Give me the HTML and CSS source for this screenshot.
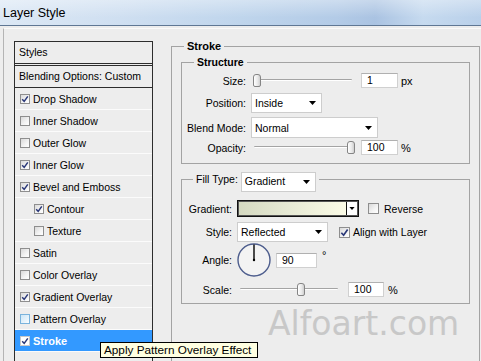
FILE: index.html
```html
<!DOCTYPE html>
<html>
<head>
<meta charset="utf-8">
<link rel="stylesheet" href="styles.css">
</head>
<body>
<div class="window">
  <header class="titlebar"><span class="title">Layer Style</span></header>
  <div class="panel">
    <div class="styles-list">
      <div class="list-head">Styles</div>
      <div class="list-blend">Blending Options: Custom</div>
      <ul class="effects">
        <li class="effect"><span class="cb checked"><svg viewBox="0 0 8 8"><path d="M1.2 4.2 L3.2 6.4 L6.8 1.4"/></svg></span>Drop Shadow</li>
        <li class="effect"><span class="cb"></span>Inner Shadow</li>
        <li class="effect"><span class="cb"></span>Outer Glow</li>
        <li class="effect"><span class="cb checked"><svg viewBox="0 0 8 8"><path d="M1.2 4.2 L3.2 6.4 L6.8 1.4"/></svg></span>Inner Glow</li>
        <li class="effect"><span class="cb checked"><svg viewBox="0 0 8 8"><path d="M1.2 4.2 L3.2 6.4 L6.8 1.4"/></svg></span>Bevel and Emboss</li>
        <li class="effect sub"><span class="cb checked"><svg viewBox="0 0 8 8"><path d="M1.2 4.2 L3.2 6.4 L6.8 1.4"/></svg></span>Contour</li>
        <li class="effect sub"><span class="cb"></span>Texture</li>
        <li class="effect"><span class="cb"></span>Satin</li>
        <li class="effect"><span class="cb"></span>Color Overlay</li>
        <li class="effect"><span class="cb checked"><svg viewBox="0 0 8 8"><path d="M1.2 4.2 L3.2 6.4 L6.8 1.4"/></svg></span>Gradient Overlay</li>
        <li class="effect"><span class="cb hover"></span>Pattern Overlay</li>
        <li class="effect selected"><span class="cb checked"><svg viewBox="0 0 8 8"><path d="M1.2 4.2 L3.2 6.4 L6.8 1.4"/></svg></span>Stroke</li>
        <li class="effect filler"></li>
      </ul>
    </div>

    <fieldset class="group stroke">
      <legend class="legend">Stroke</legend>
      <fieldset class="group inner structure">
        <legend class="legend">Structure</legend>
        <div class="rows">
          <div class="row s-row r-size">
            <span class="lbl">Size:</span>
            <div class="ctrl">
              <div class="slider"><span class="track"></span><span class="thumb" style="left:2px"></span></div>
              <span class="input w37">1</span>
              <span class="unit">px</span>
            </div>
          </div>
          <div class="row s-row r-pos">
            <span class="lbl">Position:</span>
            <div class="ctrl">
              <div class="select w71"><span>Inside</span><svg class="arrow" viewBox="0 0 7 4"><path d="M0 0 H7 L3.5 4 Z"/></svg></div>
            </div>
          </div>
          <div class="row s-row r-blend">
            <span class="lbl">Blend Mode:</span>
            <div class="ctrl">
              <div class="select w127"><span>Normal</span><svg class="arrow" viewBox="0 0 7 4"><path d="M0 0 H7 L3.5 4 Z"/></svg></div>
            </div>
          </div>
          <div class="row s-row r-opac">
            <span class="lbl">Opacity:</span>
            <div class="ctrl">
              <div class="slider"><span class="track"></span><span class="thumb" style="left:96px"></span></div>
              <span class="input w37">100</span>
              <span class="unit">%</span>
            </div>
          </div>
        </div>
      </fieldset>

      <fieldset class="group inner fill">
        <legend class="legend fill-legend">
          <span class="fill-lbl">Fill Type:</span>
          <div class="select w75 legend-select"><span>Gradient</span><svg class="arrow" viewBox="0 0 7 4"><path d="M0 0 H7 L3.5 4 Z"/></svg></div>
        </legend>
        <div class="rows">
          <div class="row f-row r-grad">
            <span class="lbl">Gradient:</span>
            <div class="ctrl">
              <div class="gradient-box"><span class="swatch"></span><span class="gbtn"><svg class="arrow" viewBox="0 0 7 4"><path d="M0 0 H7 L3.5 4 Z"/></svg></span></div>
              <span class="cb big rev"></span><span class="cb-text">Reverse</span>
            </div>
          </div>
          <div class="row f-row r-style">
            <span class="lbl">Style:</span>
            <div class="ctrl">
              <div class="select w91"><span>Reflected</span><svg class="arrow" viewBox="0 0 7 4"><path d="M0 0 H7 L3.5 4 Z"/></svg></div>
              <span class="cb big checked align"><svg viewBox="0 0 8 8"><path d="M1.2 4.2 L3.2 6.4 L6.8 1.4"/></svg></span><span class="cb-text tight">Align with Layer</span>
            </div>
          </div>
          <div class="row f-row r-angle">
            <span class="lbl">Angle:</span>
            <div class="ctrl angle-ctrl">
              <svg class="dial" viewBox="0 0 34 34"><circle cx="17" cy="17" r="16" /><line x1="17" y1="17" x2="17" y2="1.5"/><circle class="dot" cx="17" cy="17" r="1.2"/></svg>
              <span class="input w41">90</span>
              <span class="deg">°</span>
            </div>
          </div>
          <div class="row f-row r-scale">
            <span class="lbl">Scale:</span>
            <div class="ctrl">
              <div class="slider"><span class="track"></span><span class="thumb" style="left:60px"></span></div>
              <span class="input w36 scale-in">100</span>
              <span class="unit pct">%</span>
            </div>
          </div>
        </div>
      </fieldset>
    </fieldset>
  </div>
</div>
<div class="watermark">Alfoart.com</div>
<div class="tooltip">Apply Pattern Overlay Effect</div>
</body>
</html>
```

FILE: styles.css
```css
html, body {
  margin: 0;
  padding: 0;
  overflow: hidden;
  width: 481px;
  height: 361px;
}
body {
  background: #ededed;
  font-family: "Liberation Sans", Arial, sans-serif;
  font-size: 10.5px;
  color: #000;
  position: relative;
}
.titlebar {
  height: 25px;
  border-bottom: 1px solid #5f7794;
  background:
    linear-gradient(180deg, rgba(255,255,255,0.35) 0%, rgba(255,255,255,0) 70%),
    linear-gradient(90deg, #dce8f5 0%, #cfdff1 25%, #bfd5ec 50%, #b3cbe7 70%, #aac3e2 78%, #c6daef 88%, #b9d0ea 100%);
  display: flex;
  align-items: center;
}
.title {
  margin-left: 3px;
  font-size: 12.5px;
  margin-top: 1px;
}
.panel {
  margin-top: 2px;
  margin-left: 3px;
  border-top: 1px solid #fafafa;
  border-left: 1px solid #b4b4b4;
  padding-top: 11px;
  padding-left: 10px;
  display: flex;
  align-items: flex-start;
}
.styles-list {
  margin-top: 1px;
  width: 139px;
  box-sizing: border-box;
  border: 1px solid #2d2d2d;
  border-bottom: none;
}
.list-head {
  height: 21px;
  line-height: 21px;
  padding-left: 4px;
  border-bottom: 3px double #2d2d2d;
}
.list-blend {
  height: 21px;
  line-height: 21px;
  padding-left: 4px;
  border-bottom: 1px solid #2d2d2d;
}
.effects {
  list-style: none;
  margin: 0;
  padding: 0;
}
.effect {
  height: 21px;
  border-bottom: 1px solid #fbfbfb;
  display: flex;
  align-items: center;
  padding-left: 5px;
}
.effect.sub {
  padding-left: 19px;
}
.effect.selected {
  background: #3399ff;
  color: #fff;
  font-weight: bold;
  font-size: 11px;
}
.effect.filler {
  height: 40px;
  border-bottom: none;
}
.cb {
  width: 10px;
  height: 10px;
  box-sizing: border-box;
  border: 1px solid #8e8e8e;
  background: linear-gradient(135deg, #d9d9d9 0%, #f4f4f4 60%, #ffffff 100%);
  margin-right: 3px;
  display: inline-flex;
  align-items: center;
  justify-content: center;
  flex: none;
}
.cb.hover {
  border-color: #7ab3dc;
  background: linear-gradient(135deg, #cde6f7 0%, #eaf5fc 70%, #ffffff 100%);
}
.selected .cb {
  background: #ffffff;
  border-color: #c8c8c8;
}
.cb svg {
  width: 8px;
  height: 8px;
}
.cb svg path {
  fill: none;
  stroke: #2a3878;
  stroke-width: 1.5;
}
.cb.big {
  width: 11px;
  height: 11px;
}
.cb.big svg {
  width: 9px;
  height: 9px;
}

/* group boxes */
.group {
  margin: 0;
  padding: 0;
  border: 1px solid #a3a3a3;
  min-width: 0;
}
.legend {
  padding: 0 3px;
  margin-left: 12px;
  line-height: 13px;
  font-weight: bold;
}
.stroke {
  margin-left: 18px;
  width: 309px;
  box-sizing: border-box;
  padding-bottom: 70px;
}
.stroke > .legend {
  font-size: 11px;
}
.inner {
  margin-left: 9px;
  margin-right: 9px;
}
.structure {
  margin-top: 3px;
}
.fill {
  margin-top: 8px;
}
.fill-legend {
  margin-left: 11px;
  font-weight: normal;
  display: flex;
  align-items: center;
  height: 15px;
}
.fill-lbl {
  margin-right: 3px;
}
.legend-select {
  margin-top: -1px;
  margin-bottom: -5px;
  height: 21px;
}

.rows {
  display: flex;
  flex-direction: column;
}
.row {
  display: grid;
  align-items: center;
  column-gap: 5px;
}
.s-row {
  grid-template-columns: 64px auto;
}
.f-row {
  grid-template-columns: 50px auto;
}
.lbl {
  text-align: right;
  white-space: nowrap;
}
.ctrl {
  display: flex;
  align-items: center;
}
.r-size { margin-top: 3px; height: 17px; }
.r-pos { margin-top: 4px; height: 20px; }
.r-blend { margin-top: 4px; height: 21px; }
.r-opac { margin-top: 1px; height: 17px; }
.structure .rows { padding-bottom: 7px; }

.r-grad { margin-top: 13px; height: 17px; }
.r-style { margin-top: 5px; height: 20px; }
.r-angle { margin-top: 1px; height: 34px; }
.r-scale { margin-top: 5px; height: 15px; }
.fill .rows { padding-bottom: 6px; }

.slider {
  position: relative;
  width: 104px;
  height: 13px;
  flex: none;
}
.track {
  position: absolute;
  left: 3px;
  right: 3px;
  top: 5px;
  height: 1px;
  background: #a4a4a4;
  border-bottom: 1px solid #ffffff;
  border-radius: 1px;
}
.thumb {
  position: absolute;
  top: 0;
  width: 8px;
  height: 13px;
  box-sizing: border-box;
  border: 1px solid #858585;
  border-radius: 3px 3px 2px 2px;
  background: linear-gradient(90deg, #ffffff 0%, #e9e9e9 60%, #cfcfcf 100%);
}
.input {
  height: 15px;
  box-sizing: border-box;
  background: #fff;
  border: 1px solid #d0d0d0;
  border-top-color: #b0b0b0;
  padding-left: 5px;
  line-height: 13px;
  flex: none;
}
.w37 { width: 37px; margin-left: 6px; }
.w41 { width: 41px; }
.w36 { width: 36px; }
.scale-in { margin-left: 7px; }
.unit {
  margin-left: 3px;
  font-size: 11px;
}
.unit.pct { margin-left: 4px; }

.select {
  height: 20px;
  box-sizing: border-box;
  background: #fff;
  border: 1px solid #cdcdcd;
  display: flex;
  align-items: center;
  justify-content: space-between;
  padding-left: 3px;
  padding-right: 5px;
  flex: none;
}
.w71 { width: 71px; }
.w75 { width: 75px; }
.w91 { width: 91px; }
.w127 { width: 127px; height: 21px; }
.arrow {
  width: 7px;
  height: 4px;
}
.arrow path { fill: #000; }

.gradient-box {
  width: 122px;
  height: 17px;
  box-sizing: border-box;
  border: 1px solid #111;
  box-shadow: inset 0 0 0 1px #555;
  display: flex;
  flex: none;
}
.swatch {
  flex: 1;
  margin: 1px 0 1px 1px;
  background: linear-gradient(90deg, #d5d9c1 0%, #e6e9d4 45%, #fbfbe6 100%);
}
.gbtn {
  width: 10px;
  border-left: 1px solid #111;
  background: #fff;
  margin: 1px 1px 1px 0;
  display: flex;
  align-items: center;
  justify-content: center;
}
.gbtn .arrow { width: 6px; height: 3px; }
.rev { margin-left: 9px; margin-right: 5px; }
.align { margin-left: 11px; margin-right: 3px; }
.cb-text { white-space: nowrap; }

.angle-ctrl { align-items: center; }
.dial {
  width: 34px;
  height: 34px;
  flex: none;
  margin-right: 5px;
}
.dial circle {
  fill: #f3f3f3;
  stroke: #4d5d8d;
  stroke-width: 1.4;
}
.dial line {
  stroke: #000;
  stroke-width: 1.4;
}
.dial .dot {
  fill: #000;
  stroke: none;
}
.deg {
  margin-left: 5px;
  align-self: flex-start;
  margin-top: 6px;
  font-size: 11px;
}

.watermark {
  position: absolute;
  left: 268px;
  top: 307px;
  font-family: "DejaVu Sans", sans-serif;
  font-size: 33px;
  line-height: 33px;
  color: #c8c8c8;
}
.tooltip {
  position: absolute;
  left: 100px;
  top: 342px;
  width: 158px;
  height: 16px;
  box-sizing: border-box;
  border: 1px solid #000;
  background: #ffffe1;
  font-size: 11.75px;
  line-height: 14px;
  padding-left: 3px;
  white-space: nowrap;
}
```
